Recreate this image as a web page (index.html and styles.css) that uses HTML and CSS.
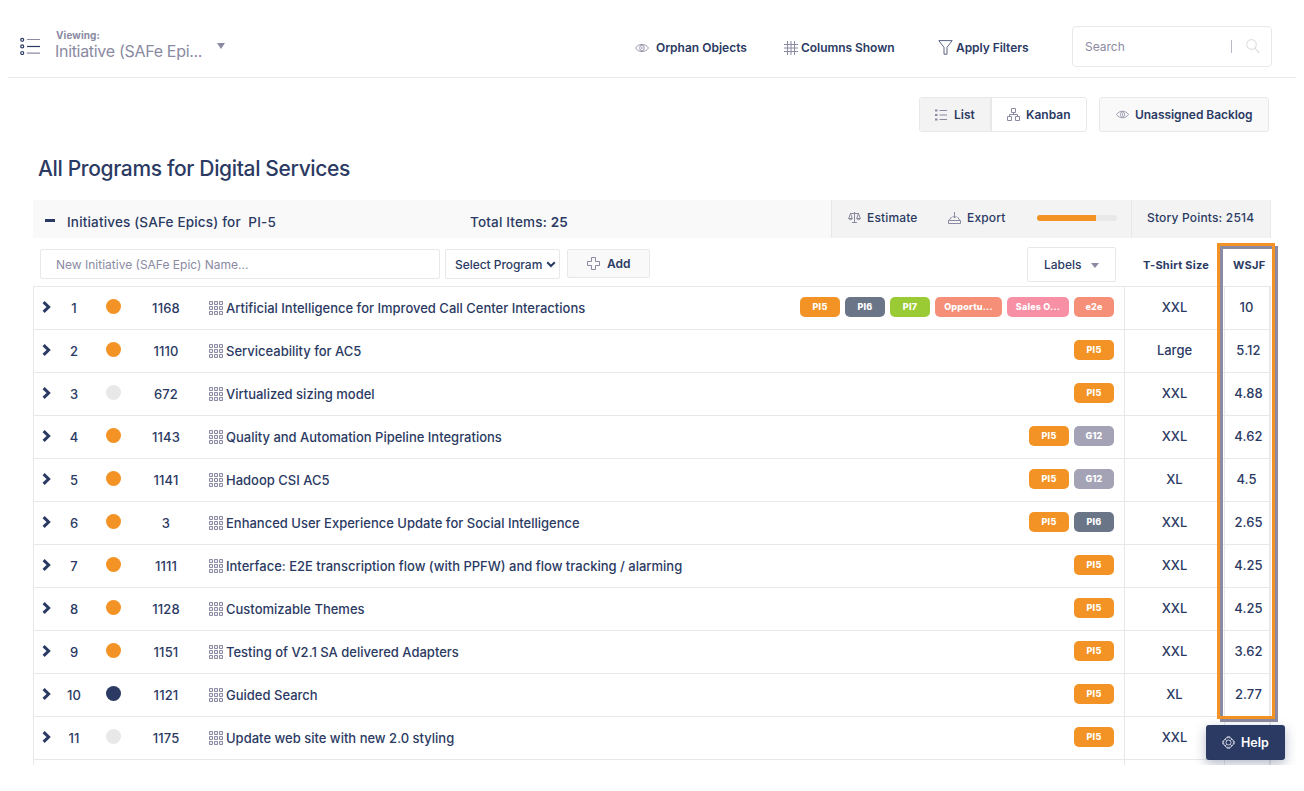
FILE: index.html
```
<!DOCTYPE html>
<html lang="en">
<head>
<meta charset="utf-8">
<title>All Programs for Digital Services</title>
<link rel="stylesheet" href="styles.css">
</head>
<body>
<svg class="defs" width="0" height="0">
  <symbol id="eye" viewBox="0 0 16 10"><path d="M.6 5C2.6 2.200 5 1 8 1S13.400 2.200 15.400 5C13.400 7.800 11 9 8 9S2.600 7.800 .6 5z"/><ellipse cx="8" cy="5" rx="2.600" ry="3.300"/><path d="M8 3.500v3"/></symbol>
  <symbol id="grid" viewBox="0 0 14 14"><path d="M.5.5h3v3h-3zM5.500.5h3v3h-3zM10.500.5h3v3h-3zM.5 5.500h3v3h-3zM5.500 5.500h3v3h-3zM10.500 5.500h3v3h-3zM.5 10.500h3v3h-3zM5.500 10.500h3v3h-3zM10.500 10.500h3v3h-3z"/></symbol>
  <symbol id="chev" viewBox="0 0 9 12"><path d="M1.600 1.200 6.600 6 1.600 10.800"/></symbol>
</svg>
<div class="app">
  <header class="topbar">
    <svg class="menu-icon" width="22" height="18" viewBox="0 0 22 18"><g fill="none" stroke="#2b3a63" stroke-width="1.200"><circle cx="2.200" cy="2.800" r="1.500"/><circle cx="2.200" cy="9.400" r="1.500"/><circle cx="2.200" cy="16" r="1.500"/><path d="M7 9.500h13"/><path d="M7 2.500h13M7 16.200h13" stroke="#8a8aa2"/></g></svg>
    <div class="viewing"><span class="v-label">Viewing:</span><span class="v-name">Initiative (SAFe Epi...</span></div>
    <i class="caret"></i>
    <nav class="actions">
      <a class="act a1"><svg class="ico" width="14" height="10"><use href="#eye"/></svg>Orphan Objects</a>
      <a class="act a2"><svg class="ico" width="14" height="14" viewBox="0 0 14 14"><path d="M3.500 0v14M7 0v14M10.500 0v14M0 3.500h14M0 7h14M0 10.500h14"/></svg>Columns Shown</a>
      <a class="act a3"><svg class="ico" width="15" height="15" viewBox="0 0 15 15"><path d="M.8.6h13.400L9 7.300v6.900H6V7.300z" stroke="#5d6484"/></svg>Apply Filters</a>
    </nav>
    <div class="search"><span>Search</span><i class="bar"></i><svg class="mag" width="14" height="15" viewBox="0 0 14 15"><circle cx="5.500" cy="5.500" r="4.800"/><path d="m8.800 9 4.400 5"/></svg></div>
  </header>

  <div class="views">
    <div class="toggle">
      <a class="btn list"><svg class="ico" width="12" height="12" viewBox="0 0 12 12"><path d="M0 1.500h2.500M0 6h2.500M0 10.500h2.500" stroke-width="2"/><path d="M4.500 1.500H12M4.500 6H12M4.500 10.500H12"/></svg>List</a>
      <a class="btn kanban"><svg class="ico" width="13" height="13" viewBox="0 0 13 13"><path d="M4.500.5h4v4h-4zM.5 8.500h4v4h-4zM8.500 8.500h4v4h-4zM6.500 4.500v2M2.500 8.500v-2h8v2"/></svg>Kanban</a>
    </div>
    <a class="btn backlog"><svg class="ico" width="13" height="9"><use href="#eye"/></svg>Unassigned Backlog</a>
  </div>

  <h1>All Programs for Digital Services</h1>

  <section class="panel">
    <div class="panel-head">
      <div class="ph-left"><i class="minus"></i><span class="ph-title">Initiatives (SAFe Epics) for &nbsp;PI-5</span><span class="ph-total">Total Items: <b>25</b></span></div>
      <div class="ph-mid">
        <a class="est"><svg class="ico" width="13" height="11" viewBox="0 0 13 11"><path d="M6.500 0v10M4 10.500h5M2 1.500h9M2.500 1.500.7 6.500h3.600zM10.500 1.500 8.700 6.500h3.600zM.7 6.500c.3 1.600 3.300 1.600 3.600 0M8.700 6.500c.3 1.600 3.300 1.600 3.600 0"/></svg>Estimate</a>
        <a class="exp"><svg class="ico" width="13" height="12" viewBox="0 0 13 12"><path d="M6.500 0v6M4.500 4l2 2 2-2M3.500 5 1 8.500h11L9.500 5M.5 8.500h12v3H.5z"/></svg>Export</a>
        <span class="progress"><i></i></span>
      </div>
      <div class="ph-right">Story Points: 2514</div>
    </div>
    <div class="tools">
      <div class="field">New Initiative (SAFe Epic) Name...</div>
      <div class="select">Select Program<svg width="10" height="7" viewBox="0 0 10 7"><path d="M1.200 1.200 5 5l3.800-3.800"/></svg></div>
      <a class="add"><svg class="ico" width="13" height="13" viewBox="0 0 13 13"><path d="M4.500.5h4v4h4v4h-4v4h-4v-4h-4v-4h4z"/></svg>Add</a>
      <a class="labels">Labels<i class="caret"></i></a>
      <span class="th ts">T-Shirt Size</span>
      <span class="th ws">WSJF</span>
    </div>
    <div class="rows">
      <div class="row"><svg class="chev"><use href="#chev"/></svg><span class="n">1</span><i class="dot"></i><span class="id">1168</span><svg class="grid"><use href="#grid"/></svg><span class="name">Artificial Intelligence for Improved Call Center Interactions</span><span class="tags"><b>PI5</b><b class="pi6">PI6</b><b class="green">PI7</b><b class="opp">Opportu...</b><b class="sales">Sales O...</b><b class="e2e">e2e</b></span><span class="size">XXL</span><span class="score"><em>10</em></span></div>
      <div class="row"><svg class="chev"><use href="#chev"/></svg><span class="n">2</span><i class="dot"></i><span class="id">1110</span><svg class="grid"><use href="#grid"/></svg><span class="name">Serviceability for AC5</span><span class="tags"><b>PI5</b></span><span class="size">Large</span><span class="score">5.12</span></div>
      <div class="row"><svg class="chev"><use href="#chev"/></svg><span class="n">3</span><i class="dot off"></i><span class="id">672</span><svg class="grid"><use href="#grid"/></svg><span class="name">Virtualized sizing model</span><span class="tags"><b>PI5</b></span><span class="size">XXL</span><span class="score">4.88</span></div>
      <div class="row"><svg class="chev"><use href="#chev"/></svg><span class="n">4</span><i class="dot"></i><span class="id">1143</span><svg class="grid"><use href="#grid"/></svg><span class="name">Quality and Automation Pipeline Integrations</span><span class="tags"><b>PI5</b><b class="g12">G12</b></span><span class="size">XXL</span><span class="score">4.62</span></div>
      <div class="row"><svg class="chev"><use href="#chev"/></svg><span class="n">5</span><i class="dot"></i><span class="id">1141</span><svg class="grid"><use href="#grid"/></svg><span class="name">Hadoop CSI AC5</span><span class="tags"><b>PI5</b><b class="g12">G12</b></span><span class="size">XL</span><span class="score"><em>4.5</em></span></div>
      <div class="row"><svg class="chev"><use href="#chev"/></svg><span class="n">6</span><i class="dot"></i><span class="id">3</span><svg class="grid"><use href="#grid"/></svg><span class="name">Enhanced User Experience Update for Social Intelligence</span><span class="tags"><b>PI5</b><b class="pi6">PI6</b></span><span class="size">XXL</span><span class="score">2.65</span></div>
      <div class="row"><svg class="chev"><use href="#chev"/></svg><span class="n">7</span><i class="dot"></i><span class="id">1111</span><svg class="grid"><use href="#grid"/></svg><span class="name">Interface: E2E transcription flow (with PPFW) and flow tracking / alarming</span><span class="tags"><b>PI5</b></span><span class="size">XXL</span><span class="score">4.25</span></div>
      <div class="row"><svg class="chev"><use href="#chev"/></svg><span class="n">8</span><i class="dot"></i><span class="id">1128</span><svg class="grid"><use href="#grid"/></svg><span class="name">Customizable Themes</span><span class="tags"><b>PI5</b></span><span class="size">XXL</span><span class="score">4.25</span></div>
      <div class="row"><svg class="chev"><use href="#chev"/></svg><span class="n">9</span><i class="dot"></i><span class="id">1151</span><svg class="grid"><use href="#grid"/></svg><span class="name">Testing of V2.1 SA delivered Adapters</span><span class="tags"><b>PI5</b></span><span class="size">XXL</span><span class="score">3.62</span></div>
      <div class="row"><svg class="chev"><use href="#chev"/></svg><span class="n">10</span><i class="dot navy"></i><span class="id">1121</span><svg class="grid"><use href="#grid"/></svg><span class="name">Guided Search</span><span class="tags"><b>PI5</b></span><span class="size">XL</span><span class="score">2.77</span></div>
      <div class="row"><svg class="chev"><use href="#chev"/></svg><span class="n">11</span><i class="dot off"></i><span class="id">1175</span><svg class="grid"><use href="#grid"/></svg><span class="name">Update web site with new 2.0 styling</span><span class="tags"><b>PI5</b></span><span class="size">XXL</span><span class="score"></span></div>
      <div class="row"><span class="tags"></span><span class="size"></span><span class="score"></span></div>
    </div>
  </section>
  <div class="highlight"></div>
  <a class="help"><svg width="13" height="13" viewBox="0 0 13 13"><circle cx="6.500" cy="6.500" r="5"/><circle cx="6.500" cy="6.500" r="2.500"/><path d="M4.500 1.300 6.500.3l2 1M4.500 11.700l2 1 2-1M1.300 4.500l-1 2 1 2M11.700 4.500l1 2-1 2M3 3l1.700 1.700M10 3 8.300 4.700M3 10l1.700-1.700M10 10 8.300 8.300"/></svg>Help</a>
</div>
</body>
</html>
```
FILE: styles.css
```
* { box-sizing: border-box; }
body { margin: 0; background: #fff; color: #2b3a63; font: 500 12.5px Inter, "Liberation Sans", sans-serif; }
svg { flex: none; display: block; }
.defs { position: absolute; }
.app { position: relative; width: 1288px; height: 765px; margin-left: 8px; overflow: hidden; }
.ico { fill: none; stroke: #8a8aa2; stroke-width: 1; }
.caret { border: 4px solid transparent; border-top: 6px solid #8a8aa2; border-bottom: 0; }

.topbar { display: flex; height: 78px; border-bottom: 1px solid #e8e8e8; padding-left: 12px; }
.menu-icon { margin-top: 37px; }
.viewing { display: flex; flex-direction: column; width: 161px; margin: 29px 0 0 13px; color: #8a8aa2; white-space: nowrap; }
.v-label { font-size: 10px; font-weight: 700; line-height: 12px; padding-left: 1px; letter-spacing: .1px; }
.v-name { font-size: 16px; font-weight: 400; line-height: 20px; letter-spacing: -.31px; }
.topbar > .caret { width: 8px; height: 6px; margin: 43px 0 0 1px; }
.actions { display: flex; height: 41px; margin: 27px 0 0 410px; width: 437px; }
.act { display: flex; align-items: center; font-size: 12px; font-weight: 600; white-space: nowrap; }
.a1 { width: 149px; gap: 7px; }
.a2 { width: 154px; gap: 3px; letter-spacing: -.05px; }
.a3 { gap: 3px; letter-spacing: -.05px; }
.search { display: flex; align-items: center; width: 200px; height: 41px; margin-top: 26px; padding: 0 12px; border: 1px solid #e8e8e8; border-radius: 4px; color: #8a8aa2; font-size: 12px; font-weight: 400; }
.search .bar { width: 1px; height: 13px; margin-left: auto; background: #b9b9c8; }
.mag { margin-left: 14px; margin-right: -1px; fill: none; stroke: #e0e0e0; stroke-width: 1.200; }

.views { display: flex; justify-content: flex-end; gap: 12px; margin: 19px 27px 0 0; height: 35px; }
.toggle { display: flex; border: 1px solid #e8e8e8; border-radius: 3px; width: 168px; }
.btn { display: flex; align-items: center; font-size: 12px; font-weight: 600; white-space: nowrap; }
.list { width: 72px; padding-left: 15px; gap: 7px; background: #f3f3f3; border-right: 2px solid #e8e8e8; }
.kanban { padding-left: 15px; gap: 6px; }
.backlog { width: 170px; padding-left: 16px; gap: 6px; border: 1px solid #e8e8e8; border-radius: 3px; background: #f9f9f9; letter-spacing: -.05px; }

h1 { margin: 23px 0 0 30px; font-size: 21px; font-weight: 500; line-height: 28px; letter-spacing: -.35px; }

.panel { margin: 17px 0 0 25px; width: 1238px; }
.panel-head { display: flex; height: 38px; background: #f9f9f9; white-space: nowrap; }
.ph-left { display: flex; align-items: center; width: 798px; padding: 5px 0 0 12px; font-size: 13.500px; letter-spacing: .17px; }
.minus { width: 10px; height: 3px; margin-top: -2px; background: #2b3a63; }
.ph-title { width: 403px; margin-left: 12px; }
.ph-total b { font-weight: 600; }
.ph-mid { display: flex; align-items: center; width: 300px; padding: 0 0 3px 16px; background: #f3f3f3; border-left: 1px solid #e8e8e8; }
.est, .exp { display: flex; align-items: center; gap: 6px; font-size: 12px; letter-spacing: .15px; }
.est { width: 100px; }
.exp { width: 89px; }
.progress { width: 80px; height: 6px; border-radius: 3px; background: #e8e8e8; overflow: hidden; margin-top: 1px; }
.progress i { display: block; width: 59px; height: 6px; background: #f39325; }
.ph-right { width: 140px; padding-left: 15px; line-height: 36px; background: #f3f3f3; border: solid #e8e8e8; border-width: 0 1px; font-size: 12px; letter-spacing: .18px; }

.tools { display: flex; height: 48px; padding-left: 7px; white-space: nowrap; }
.field, .select { display: flex; align-items: center; height: 30px; margin-top: 11px; border: 1px solid #e8e8e8; border-radius: 2px; }
.field { width: 400px; padding-left: 15px; color: #8a8aa2; font-weight: 400; font-size: 12px; }
.select { width: 115px; margin-left: 5px; padding: 0 3px 0 9px; justify-content: space-between; font-size: 12px; letter-spacing: -.05px; }
.select svg { fill: none; stroke: #2b3a63; stroke-width: 2; }
.add { display: flex; align-items: center; gap: 7px; width: 83px; height: 29px; margin: 11px 0 0 7px; padding-left: 19px; background: #f9f9f9; border: 1px solid #e8e8e8; border-radius: 2px; font-size: 12px; font-weight: 600; }
.labels { display: flex; align-items: center; gap: 9px; width: 89px; height: 35px; margin: 9px 0 0 377px; padding-left: 16px; border: 1px solid #e8e8e8; border-radius: 2px; font-size: 12px; }
.labels .caret { border-top-width: 5px; margin-top: 2px; }
.th { font-size: 11px; font-weight: 700; line-height: 38px; padding-top: 8px; letter-spacing: .25px; }
.ts { width: 90px; margin-left: 27px; }

.rows { width: 1238px; border: 1px solid #e8e8e8; border-width: 1px 2px 0 1px; }
.row { display: flex; align-items: center; height: 43px; border-bottom: 1px solid #e8e8e8; white-space: nowrap; font-size: 13px; }
.chev { width: 9px; height: 12px; margin: 0 0 2px 8px; fill: none; stroke: #2b3a63; stroke-width: 3; }
.n { width: 40px; margin-left: 3px; text-align: center; }
.dot { width: 15px; height: 15px; margin: 0 0 3px 12px; border-radius: 50%; background: #f39325; }
.dot.off { background: #e8e8e8; }
.dot.navy { background: #2b3a63; }
.id { width: 60px; margin-left: 15px; text-align: center; letter-spacing: .15px; }
.n, .id, .name { line-height: 16px; }
.grid { width: 14px; height: 14px; margin-left: 13px; fill: #efeff3; stroke: #8a8aa2; }
.name { margin-left: 3px; }
.tags { display: flex; align-items: center; justify-content: flex-end; gap: 5px; height: 42px; margin-left: auto; padding: 0 10px 2px 0; border-right: 1px solid #e8e8e8; }
.tags b { width: 40px; height: 20px; border-radius: 5px; background: #f39325; color: #fff; font-size: 9px; font-weight: 800; line-height: 20px; text-align: center; letter-spacing: .2px; }
.tags .pi6 { background: #6b7588; }
.tags .green { background: #9acb35; }
.tags .opp { width: 67px; background: #f58f78; }
.tags .sales { width: 62px; background: #f790a4; }
.tags .e2e { background: #f58f78; }
.tags .g12 { background: #a3a3b5; }
.size { width: 100px; height: 42px; line-height: 41px; text-align: center; border-right: 1px solid #e8e8e8; }
.score { width: 44px; height: 42px; line-height: 41px; text-align: center; padding-left: 3px; letter-spacing: .1px; }
.score em { font-style: normal; margin-right: 4px; }

.highlight { position: absolute; left: 1209px; top: 243px; width: 58px; height: 476px; border: 3px solid #f39325; filter: drop-shadow(3px 3px 0 #8a8aa2); }
.help { position: absolute; left: 1198px; top: 725px; width: 79px; height: 35px; display: flex; align-items: center; gap: 6px; padding-left: 16px; border-radius: 3px; background: #2b3a63; color: #fff; font-size: 12.500px; font-weight: 600; box-shadow: 0 4px 12px rgba(43, 58, 99, .35); }
.help svg { fill: none; stroke: #d5d8e2; stroke-width: .9; }
```
